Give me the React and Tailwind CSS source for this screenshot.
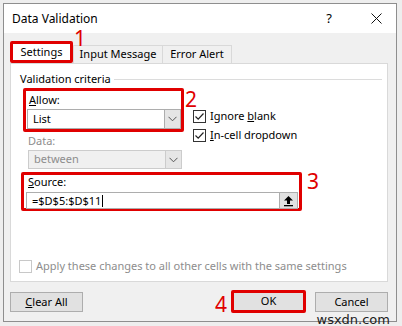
import React from 'react';

const RED = 'border-[#e00000]';

const Chevron = () => (
  <svg width="9" height="6" viewBox="0 0 9 6" fill="none">
    <path d="M0.5 0.8 L4.5 4.8 L8.5 0.8" stroke="#555" strokeWidth="1" />
  </svg>
);

const Check = () => (
  <svg width="11" height="11" viewBox="0 0 11 11" fill="none">
    <path d="M1.5 5.5 L4.2 8.2 L9.5 2.5" stroke="#222" strokeWidth="1.2" />
  </svg>
);

const CheckBox = ({ checked, disabled }) => (
  <div
    className={`w-[13px] h-[13px] shrink-0 border flex items-center justify-center bg-white ${
      disabled ? 'border-[#c8c8c8]' : 'border-[#333]'
    }`}
  >
    {checked && <Check />}
  </div>
);

const Combo = ({ value, disabled, height }) => (
  <div
    className={`flex w-[154px] ${height} border ${
      disabled ? 'border-[#cccccc] bg-[#f0f0f0] text-[#8d8d8d]' : 'border-[#adadad] bg-white text-black'
    }`}
  >
    <div className="flex-1 pl-[5px] flex items-center">{value}</div>
    <div
      className={`w-[16px] flex items-center justify-center border-l ${
        disabled ? 'border-[#cccccc] bg-[#e6e6e6]' : 'border-[#adadad] bg-[#e5e5e5]'
      }`}
    >
      <Chevron />
    </div>
  </div>
);

const Num = ({ n, className }) => (
  <span className={`absolute text-[21px] leading-none text-[#e00000] ${className}`}>{n}</span>
);

export default function App() {
  return (
    <div
      className="relative w-[402px] h-[326px] bg-[#eeeeee] overflow-hidden pt-[3px] pl-[3px] text-[11px] text-black"
      style={{ fontFamily: '"Noto Sans", "Open Sans", sans-serif' }}
    >
      <div className="w-[394px] h-[319px] border border-[#8e8e8e] bg-[#f0f0f0] flex flex-col">
        {/* title bar */}
        <div className="h-[29px] bg-white flex items-center pl-[8px] pr-[14px] text-[12px]">
          <span>Data Validation</span>
          <span className="ml-auto mr-[39px] text-[13px]">?</span>
          <svg width="11" height="11" viewBox="0 0 11 11">
            <path d="M0.5 0.5 L10.5 10.5 M10.5 0.5 L0.5 10.5" stroke="#111" strokeWidth="1" />
          </svg>
        </div>

        <div className="px-[6px] pt-[8px]">
          {/* tabs */}
          <div className="flex items-end h-[22px]">
            <div className={`relative w-[63px] h-[22px] border-[3px] ${RED} rounded-[2px] bg-white flex items-center justify-center`}>
              Settings
              <Num n="1" className="left-[61px] -top-[16px]" />
            </div>
            <div className="w-[90px] h-[18px] border border-b-0 border-[#d9d9d9] flex items-center justify-center">
              Input Message
            </div>
            <div className="w-[69px] h-[18px] border border-l-0 border-b-0 border-[#d9d9d9] flex items-center justify-center">
              Error Alert
            </div>
          </div>

          {/* panel */}
          <div className="w-[378px] h-[219px] border border-[#d9d9d9] bg-white flex flex-col">
            <div className="flex items-center mt-[7px] pl-[9px] pr-[5px] leading-[16px]">
              <span>Validation criteria</span>
              <div className="flex-1 h-px bg-[#dcdcdc] ml-[3px]" />
            </div>

            <div className="flex h-[44px] mt-px">
              <div className={`relative ml-[12px] w-[161px] h-[44px] border-[3px] ${RED} rounded-[2px] flex flex-col`}>
                <div className="pl-[3px] mt-px leading-[16px]">
                  <u>A</u>llow:
                </div>
                <div className="mt-px ml-px">
                  <Combo value="List" height="h-[20px]" />
                </div>
                <Num n="2" className="left-[159px] -top-[2px]" />
              </div>
              <div className="ml-[9px] mt-[21px] flex flex-col gap-[5px]">
                <div className="flex items-center gap-[4px] leading-[14px]">
                  <CheckBox checked />
                  <span>
                    Ignore <u>b</u>lank
                  </span>
                </div>
                <div className="flex items-center gap-[4px] leading-[14px]">
                  <CheckBox checked />
                  <span>
                    <u>I</u>n-cell dropdown
                  </span>
                </div>
              </div>
            </div>

            <div className="ml-[17px] mt-[1px] leading-[16px] text-[#8d8d8d]">Data:</div>
            <div className="ml-[17px] mt-px">
              <Combo value="between" disabled height="h-[19px]" />
            </div>

            <div className={`relative ml-[10px] mt-[3px] w-[281px] h-[39px] border-[3px] ${RED} rounded-[2px] flex flex-col`}>
              <div className="pl-[4px] leading-[14px]">
                <u>S</u>ource:
              </div>
              <div className="mt-[3px] ml-[2px] w-[272px] h-[17px] border border-[#adadad] flex bg-white">
                <div className="flex-1 pl-[5px] leading-[15px] flex items-center">
                  =$D$5:$D$11
                  <span className="w-px h-[12px] bg-black ml-px" />
                </div>
                <div className="w-[18px] bg-[#e1e1e1] border-l border-[#adadad] flex items-center justify-center">
                  <svg width="11" height="12" viewBox="0 0 11 12">
                    <path d="M5.5 1 L10 5.5 L7 5.5 L7 9 L4 9 L4 5.5 L1 5.5 Z" fill="#000" />
                    <rect x="1" y="10" width="9" height="1.3" fill="#000" />
                  </svg>
                </div>
              </div>
              <Num n="3" className="left-[283px] -top-[4px]" />
            </div>

            <div className="flex items-center gap-[4px] ml-[8px] mt-[47px] leading-[16px] text-[#8d8d8d]">
              <CheckBox disabled />
              <span>Apply these changes to all other cells with the same settings</span>
            </div>
          </div>

          {/* buttons */}
          <div className="flex items-center mt-[8px] h-[23px]">
            <button className="w-[73px] h-[20px] bg-[#e1e1e1] border border-[#adadad] leading-[18px]">
              <u>C</u>lear All
            </button>
            <div className="relative ml-[148px] w-[75px] h-[23px] border-[3px] border-[#e00000] rounded-[2px] bg-[#e1e1e1] flex items-center justify-center">
              OK
              <Num n="4" className="-left-[19px] top-[1px]" />
            </div>
            <button className="ml-[9px] w-[73px] h-[20px] bg-[#e1e1e1] border border-[#adadad] leading-[18px]">
              Cancel
            </button>
          </div>
        </div>
      </div>
      <span
        className="absolute right-[12px] bottom-0 text-[13px] leading-[13px] text-[#222]"
        style={{ fontFamily: '"DejaVu Sans", sans-serif' }}
      >
        wsxdn.com
      </span>
    </div>
  );
}
